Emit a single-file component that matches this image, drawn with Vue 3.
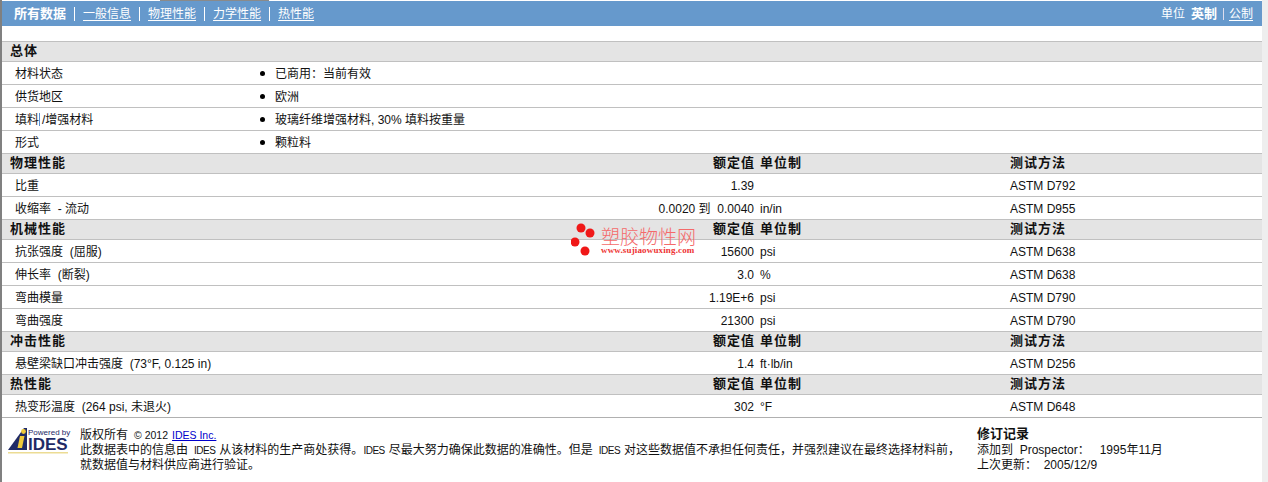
<script setup>
const tabs = ['一般信息', '物理性能', '力学性能', '热性能']
const sections = [
  { title: '总体', plain: true, rows: [
    { label: '材料状态', text: '已商用：当前有效' },
    { label: '供货地区', text: '欧洲' },
    { label: '/增强材料', lead: '填料', text: '玻璃纤维增强材料, 30% 填料按重量' },
    { label: '形式', text: '颗粒料' },
  ] },
  { title: '物理性能', rows: [
    { label: '比重', value: '1.39', unit: '', method: 'ASTM D792' },
    { label: '收缩率\u00a0\u00a0- 流动', value: '0.0020 到\u00a0\u00a00.0040', unit: 'in/in', method: 'ASTM D955' },
  ] },
  { title: '机械性能', rows: [
    { label: '抗张强度\u00a0\u00a0(屈服)', value: '15600', unit: 'psi', method: 'ASTM D638' },
    { label: '伸长率\u00a0\u00a0(断裂)', value: '3.0', unit: '%', method: 'ASTM D638' },
    { label: '弯曲模量', value: '1.19E+6', unit: 'psi', method: 'ASTM D790' },
    { label: '弯曲强度', value: '21300', unit: 'psi', method: 'ASTM D790' },
  ] },
  { title: '冲击性能', rows: [
    { label: '悬壁梁缺口冲击强度\u00a0\u00a0(73°F, 0.125 in)', value: '1.4', unit: 'ft·lb/in', method: 'ASTM D256' },
  ] },
  { title: '热性能', rows: [
    { label: '热变形温度\u00a0\u00a0(264 psi, 未退火)', value: '302', unit: '°F', method: 'ASTM D648' },
  ] },
]
</script>

<template>
  <div class="page">
    <div class="top-mark"></div>
    <main class="sheet">
      <nav class="nav">
        <div class="tabs">
          <strong class="current">所有数据</strong>
          <template v-for="t in tabs" :key="t">
            <span class="sep"></span>
            <a class="tab">{{ t }}</a>
          </template>
        </div>
        <div class="units">
          <span>单位</span>
          <strong>英制</strong>
          <span class="sep small"></span>
          <a class="tab">公制</a>
        </div>
      </nav>

      <section class="data">
        <template v-for="s in sections" :key="s.title">
          <div class="row head">
            <div class="label">{{ s.title }}</div>
            <template v-if="!s.plain">
              <div class="value">额定值</div>
              <div class="unit">单位制</div>
              <div class="method">测试方法</div>
            </template>
          </div>
          <div v-for="r in s.rows" :key="r.label" class="row">
            <div class="label indent"><template v-if="r.lead">{{ r.lead }}<i class="caret"></i></template>{{ r.label }}</div>
            <template v-if="s.plain">
              <div class="bullet-cell"><i class="dot"></i><span>{{ r.text }}</span></div>
            </template>
            <template v-else>
              <div class="value">{{ r.value }}</div>
              <div class="unit">{{ r.unit }}</div>
              <div class="method">{{ r.method }}</div>
            </template>
          </div>
        </template>
      </section>

      <footer class="foot">
        <svg class="logo" width="64" height="30" viewBox="0 0 64 30">
          <polygon points="17,3 20,3 20,25 1,25" fill="#1f2a66" />
          <polygon points="13,11 17.5,11 15,23 10.5,23" fill="#efc93a" />
          <circle cx="16.5" cy="6.5" r="2.4" fill="#efc93a" />
          <text x="21" y="10" class="powered">Powered by</text>
          <text x="21" y="25" class="ides">IDES</text>
          <rect x="1" y="27" width="60" height="1.5" fill="#ecdc94" />
        </svg>
        <div class="legal">
          <div>版权所有<span class="en lead">© 2012</span><a class="en link">IDES Inc.</a></div>
          <div>此数据表中的信息由<span class="en ides-word gap">IDES</span>从该材料的生产商处获得。<span class="en ides-word">IDES</span>尽最大努力确保此数据的准确性。但是<span class="en ides-word gap">IDES</span>对这些数据值不承担任何责任，并强烈建议在最终选择材料前，</div>
          <div>就数据值与材料供应商进行验证。</div>
        </div>
        <div class="history">
          <strong>修订记录</strong>
          <div>添加到&nbsp;&nbsp;Prospector：&nbsp;&nbsp;&nbsp;1995年11月</div>
          <div>上次更新：&nbsp;&nbsp;2005/12/9</div>
        </div>
      </footer>

      <div class="mark">
        <svg width="30" height="36" viewBox="0 0 30 36">
          <circle cx="10" cy="5" r="4.5" fill="#f01818" />
          <circle cx="19" cy="10" r="4.5" fill="#f01818" />
          <circle cx="4" cy="19" r="4.5" fill="#f01818" />
          <circle cx="14" cy="28" r="4.5" fill="#f01818" />
        </svg>
        <div class="mark-text">
          <div class="mark-cn">塑胶物性网</div>
          <div class="mark-en">www.sujiaowuxing.com</div>
        </div>
      </div>
    </main>
  </div>
</template>

<style>
html, body { margin: 0; padding: 0; background: #fff; overflow: hidden; }
</style>

<style scoped>
.page {
  position: relative;
  width: 1268px;
  height: 482px;
  box-sizing: border-box;
  padding: 1px 6px 0 2px;
  background: linear-gradient(#808080, #808080) left / 2px 100% no-repeat, linear-gradient(#eeeeee, #eeeeee) right / 6px 100% no-repeat, #fff;
  font: 12px/16px "Liberation Sans", "Noto Sans CJK SC", sans-serif;
  color: #111;
  overflow: hidden;
}
.top-mark { position: absolute; left: 160px; top: 0; width: 109px; height: 1px; background: #8a8a8a; }
.sheet { position: relative; height: 100%; }
.nav {
  height: 25px;
  background: #6699cc;
  color: #fff;
  display: flex;
  justify-content: space-between;
  align-items: center;
  padding: 0 9px 0 12px;
}
.tabs, .units { display: flex; align-items: center; }
.current { font-size: 13px; }
.tab { text-decoration: underline; text-underline-offset: 2px; }
.sep { width: 1px; height: 14px; background: #fff; margin: 0 8px 0 8px; }
.sep.small { margin: 0 5px 0 6px; background: #dde; height: 12px; }
.units strong { margin-left: 6px; font-size: 13px; }
.data { margin-top: 15px; border-bottom: 1px solid #b0b0b0; }
.row {
  height: 21px;
  padding-top: 1px;
  border-top: 1px solid #c0c0c0;
  display: grid;
  grid-template-columns: 250px 502px 250px 1fr;
  align-items: center;
  white-space: nowrap;
}
.row.head { height: 17px; padding: 0 0 2px; background: #e4e4e4; font-weight: 700; font-size: 13px; letter-spacing: 1px; }
.head .value { margin-right: -1px; }
.label { padding-left: 8px; }
.label.indent { padding-left: 13px; }
.caret { display: inline-block; width: 1px; height: 13px; margin: 0 2px 0 0; vertical-align: -2px; background: #5b8fd0; }
.bullet-cell { grid-column: 2 / 5; display: flex; align-items: center; padding-left: 8px; }
.dot { width: 5px; height: 5px; border-radius: 50%; background: #000; margin-right: 10px; }
.value { text-align: right; }
.unit { padding-left: 6px; }
.method { padding-left: 6px; }
.foot {
  display: flex;
  padding: 10px 0 0 5px;
}
.logo { flex: none; margin: -3px 9px 0 0; }
.powered { font: 8px "Liberation Sans", sans-serif; fill: #1f2a66; }
.ides { font: 700 17px "Liberation Sans", sans-serif; fill: #1f2a66; }
.legal { width: 882px; line-height: 14.5px; flex: none; white-space: nowrap; }
.en { font-size: 10.5px; }
.en.lead { margin: 0 4px 0 6px; }
.ides-word { font-size: 10px; letter-spacing: -0.5px; margin-right: 4px; }
.ides-word.gap { margin-left: 6px; }
.link { color: #0000cc; text-decoration: underline; }
.history { margin-left: 15px; line-height: 15px; }
.history strong { display: block; font-size: 13px; margin-top: -2px; padding-bottom: 2px; }
.mark {
  position: absolute;
  left: 569px;
  top: 222px;
  display: flex;
  pointer-events: none;
}
.mark-text { padding-top: 3px; }
.mark-cn { color: #f46a6a; font: 300 19px/20px "Noto Sans CJK SC", sans-serif; }
.mark-en { color: #e33; font: 700 9px/9px "Liberation Serif", serif; letter-spacing: 0.15px; }
</style>
